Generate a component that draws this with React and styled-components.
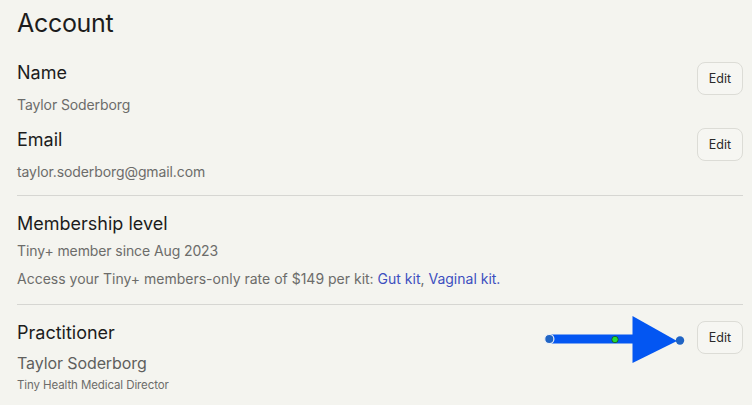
import React from "react";
import styled, { createGlobalStyle } from "styled-components";

const GlobalStyle = createGlobalStyle`
  html, body {
    margin: 0;
    padding: 0;
    background: #f4f4ef;
  }
  body {
    font-family: Inter, "Liberation Sans", Arial, sans-serif;
    color: #1c1c1c;
  }
`;

const Page = styled.div`
  position: relative;
  width: 752px;
  height: 405px;
  overflow: hidden;
  box-sizing: border-box;
  padding: 8px 9px 0 17px;
`;

const Title = styled.h1`
  margin: 0 0 23px;
  font-size: 25px;
  line-height: 30px;
  font-weight: 400;
  letter-spacing: -0.3px;
`;

const Section = styled.div`
  display: flex;
  justify-content: space-between;
  align-items: flex-start;
  margin-bottom: ${(p) => p.$gap || 0}px;
`;

const Info = styled.div`
  display: flex;
  flex-direction: column;
`;

const Label = styled.div`
  font-size: 18px;
  line-height: 24px;
  color: #1c1c1c;
`;

const Value = styled.div`
  margin-top: ${(p) => p.$top || 0}px;
  font-size: ${(p) => p.$size || 14}px;
  line-height: ${(p) => (p.$size || 14) + 6}px;
  color: ${(p) => p.$tone || "#6c6c6a"};
  letter-spacing: ${(p) => p.$track ?? -0.1}px;
`;

const Link = styled.a`
  color: #3d4fbf;
  text-decoration: none;
`;

const EditButton = styled.button`
  width: 46px;
  height: 33px;
  margin-top: ${(p) => p.$top || 0}px;
  border: 1px solid #dcdcd6;
  border-radius: 8px;
  background: #f6f6f2;
  font-family: inherit;
  font-size: 12.5px;
  color: #2a2a2a;
  cursor: pointer;
`;

const Divider = styled.hr`
  margin: 0 0 ${(p) => p.$after}px;
  border: none;
  border-top: 1px solid #d6d6d2;
`;

const ArrowMark = styled.svg`
  position: absolute;
  left: 540px;
  top: 310px;
  width: 150px;
  height: 60px;
`;

function Arrow() {
  return (
    <ArrowMark viewBox="0 0 150 60">
      <rect x="7" y="24.5" width="88" height="9" rx="2" fill="#0356f2" />
      <polygon points="92.5,6 92.5,53 137,31" fill="#0356f2" />
      <circle cx="9.3" cy="29" r="4.6" fill="#2064c4" stroke="#e8eef8" strokeWidth="1.2" />
      <circle cx="75" cy="29.5" r="3.2" fill="#22dd33" stroke="#1b4a2a" strokeWidth="0.8" />
      <circle cx="140" cy="30.5" r="4.2" fill="#2064c4" />
    </ArrowMark>
  );
}

function App() {
  return (
    <Page>
      <GlobalStyle />
      <Title>Account</Title>

      <Section $gap={13}>
        <Info>
          <Label>Name</Label>
          <Value $top={10}>Taylor Soderborg</Value>
        </Info>
        <EditButton $top={1}>Edit</EditButton>
      </Section>

      <Section $gap={13}>
        <Info>
          <Label>Email</Label>
          <Value $top={10}>taylor.soderborg@gmail.com</Value>
        </Info>
        <EditButton>Edit</EditButton>
      </Section>

      <Divider $after={16} />

      <Section $gap={15}>
        <Info>
          <Label>Membership level</Label>
          <Value $top={5}>Tiny+ member since Aug 2023</Value>
          <Value $top={8} $track={0}>
            Access your Tiny+ members-only rate of $149 per kit:{" "}
            <Link href="#">Gut kit</Link>, <Link href="#">Vaginal kit.</Link>
          </Value>
        </Info>
      </Section>

      <Divider $after={16} />

      <Section>
        <Info>
          <Label>Practitioner</Label>
          <Value $top={7} $size={16} $tone="#5f5f5d">
            Taylor Soderborg
          </Value>
          <Value $top={3} $size={11.5}>
            Tiny Health Medical Director
          </Value>
        </Info>
        <EditButton $top={0}>Edit</EditButton>
      </Section>

      <Arrow />
    </Page>
  );
}

export default App;
